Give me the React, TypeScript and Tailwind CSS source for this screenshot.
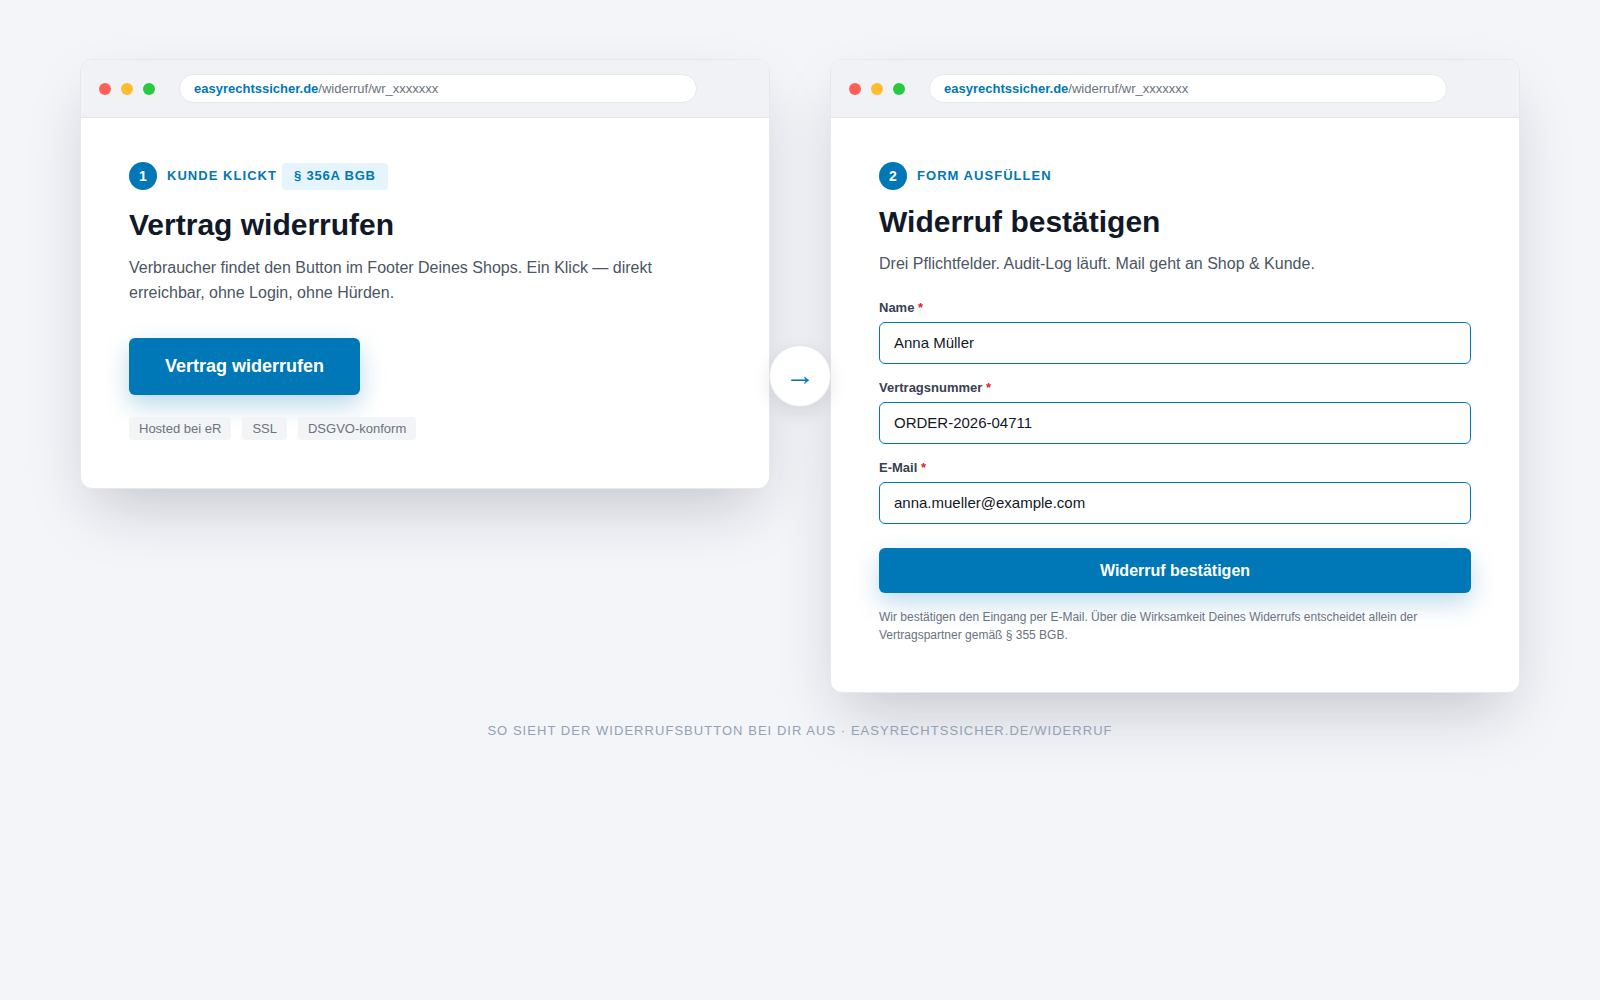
import React from 'react'

const BLUE = 'text-[#0077b6]'

function BrowserChrome() {
  return (
    <div className="flex items-center h-[58px] px-[18px] bg-[#f1f2f6] border-b border-[#e3e5ea]">
      <div className="flex items-center gap-[10px]">
        <span className="w-3 h-3 rounded-full bg-[#ff5f57]" />
        <span className="w-3 h-3 rounded-full bg-[#febc2e]" />
        <span className="w-3 h-3 rounded-full bg-[#28c840]" />
      </div>
      <div className="ml-[24px] flex items-center h-[29px] w-[518px] rounded-full bg-white border border-[#e5e7eb] px-[14px] text-[13px]">
        <span className={`font-bold ${BLUE}`}>easyrechtssicher.de</span>
        <span className="text-[#6b7280]">/widerruf/wr_xxxxxxx</span>
      </div>
    </div>
  )
}

function StepLabel({ n, label, badge }: { n: number; label: string; badge?: string }) {
  return (
    <div className="flex items-center h-[28px]">
      <span className="flex items-center justify-center w-[28px] h-[28px] rounded-full bg-[#0077b6] text-white text-[14px] font-bold">
        {n}
      </span>
      <span className={`ml-[10px] text-[13px] font-bold tracking-[0.08em] ${BLUE}`}>{label}</span>
      {badge && (
        <span className={`ml-[5px] h-[27px] flex items-center px-[12px] rounded-[4px] bg-[#e6f4fd] text-[13px] font-bold tracking-[0.06em] ${BLUE}`}>
          {badge}
        </span>
      )}
    </div>
  )
}

function Field({ label, value }: { label: string; value: string }) {
  return (
    <div className="flex flex-col">
      <label className="text-[13px] font-bold text-[#374151] leading-[16px] mb-[6px]">
        {label} <span className="text-[#dc2626]">*</span>
      </label>
      <div className="h-[42px] flex items-center px-[14px] rounded-[6px] border border-[#0077b6] bg-white text-[15px] text-[#111827]">
        {value}
      </div>
    </div>
  )
}

const CARD =
  'w-[690px] rounded-[12px] overflow-hidden bg-white border border-[#e6e8ee] shadow-[0_28px_60px_-14px_rgba(15,23,42,0.22)]'

export default function App() {
  return (
    <div
      className="min-h-screen w-full bg-[#f4f5f9] pt-[59px]"
      style={{ fontFamily: '"Liberation Sans", Arial, sans-serif' }}
    >
      <div className="w-[1440px] mx-auto">
        <div className="flex items-start">
          {/* Step 1 */}
          <div className={CARD}>
            <BrowserChrome />
            <div className="pt-[44px] px-12 pb-12">
              <StepLabel n={1} label="KUNDE KLICKT" badge="§ 356A BGB" />
              <h1 className="mt-[17px] text-[30px] leading-[36px] font-bold text-[#111827]">Vertrag widerrufen</h1>
              <p className="mt-[12px] w-[530px] text-[16px] leading-[25px] text-[#4b5563]">
                Verbraucher findet den Button im Footer Deines Shops. Ein Klick — direkt erreichbar, ohne Login, ohne Hürden.
              </p>
              <button className="mt-[33px] h-[57px] px-[36px] rounded-[6px] bg-[#0077b6] text-white text-[18px] font-bold shadow-[0_10px_24px_rgba(0,119,182,0.28)]">
                Vertrag widerrufen
              </button>
              <div className="mt-[22px] flex gap-[11px]">
                {['Hosted bei eR', 'SSL', 'DSGVO-konform'].map(t => (
                  <span key={t} className="h-[23px] flex items-center px-[10px] rounded-[4px] bg-[#f3f4f6] text-[13px] text-[#6b7280]">
                    {t}
                  </span>
                ))}
              </div>
            </div>
          </div>

          {/* Arrow */}
          <div className="relative z-10 w-[60px] self-stretch flex items-center justify-center">
            <div className="flex items-center justify-center w-[62px] h-[62px] shrink-0 rounded-full bg-white border border-[#e2e5ea] shadow-[0_6px_18px_rgba(15,23,42,0.10)]">
              <span className={`text-[30px] leading-none ${BLUE} -mt-[2px]`}>→</span>
            </div>
          </div>

          {/* Step 2 */}
          <div className={CARD}>
            <BrowserChrome />
            <div className="pt-[44px] px-12 pb-12">
              <StepLabel n={2} label="FORM AUSFÜLLEN" />
              <h1 className="mt-[14px] text-[30px] leading-[36px] font-bold text-[#111827]">Widerruf bestätigen</h1>
              <p className="mt-[12px] text-[16px] leading-[24px] text-[#4b5563]">
                Drei Pflichtfelder. Audit-Log läuft. Mail geht an Shop &amp; Kunde.
              </p>
              <div className="mt-[24px] flex flex-col gap-[16px]">
                <Field label="Name" value="Anna Müller" />
                <Field label="Vertragsnummer" value="ORDER-2026-04711" />
                <Field label="E-Mail" value="anna.mueller@example.com" />
              </div>
              <button className="mt-[24px] w-full h-[45px] rounded-[6px] bg-[#0077b6] text-white text-[16px] font-bold shadow-[0_10px_24px_rgba(0,119,182,0.25)]">
                Widerruf bestätigen
              </button>
              <p className="mt-[15px] text-[12px] leading-[18px] text-[#6b7280]">
                Wir bestätigen den Eingang per E-Mail. Über die Wirksamkeit Deines Widerrufs entscheidet allein der Vertragspartner gemäß § 355 BGB.
              </p>
            </div>
          </div>
        </div>

        <p className="mt-[28px] text-center text-[13px] tracking-[0.08em] text-[#94a0b4]">
          SO SIEHT DER WIDERRUFSBUTTON BEI DIR AUS · EASYRECHTSSICHER.DE/WIDERRUF
        </p>
      </div>
    </div>
  )
}
